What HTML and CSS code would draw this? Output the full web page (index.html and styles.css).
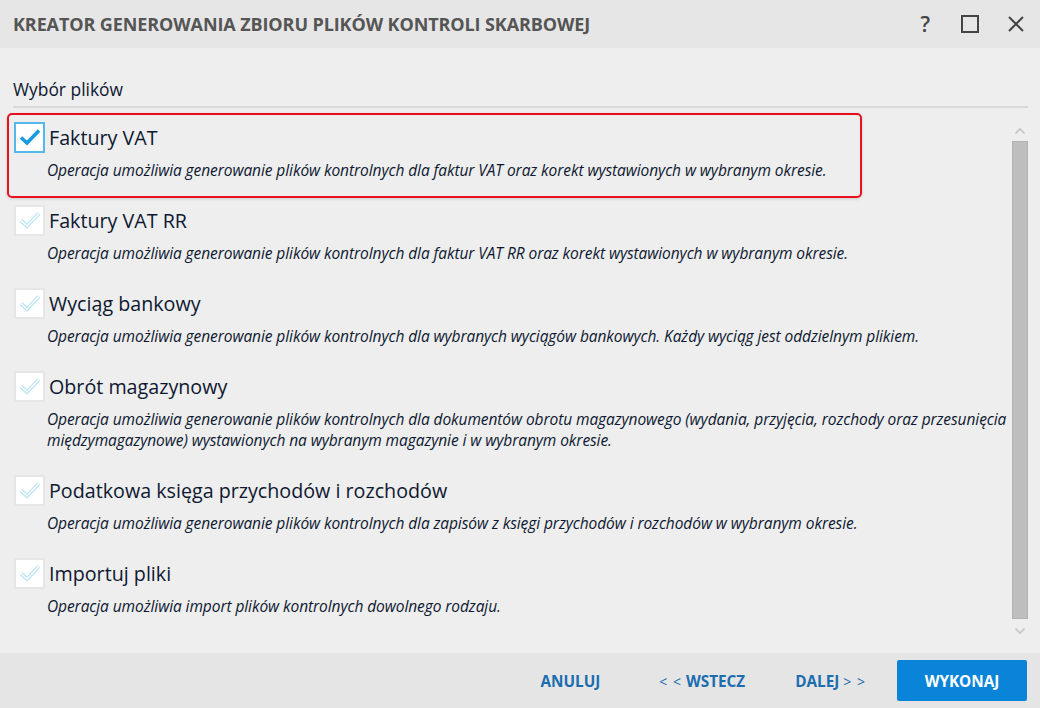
FILE: index.html
```html
<!DOCTYPE html>
<html lang="pl">
<head>
    <meta charset="UTF-8">
    <title>Kreator generowania zbioru plików kontroli skarbowej</title>
    <link rel="stylesheet" href="styles.css">
</head>
<body>
    <div class="dialog">
        <div class="titlebar">
            <div class="title">KREATOR GENEROWANIA ZBIORU PLIKÓW KONTROLI SKARBOWEJ</div>
            <div class="win-btns">
                <span class="help">?</span>
                <svg width="18" height="18" viewBox="0 0 18 18"><rect x="1" y="1" width="16" height="16" fill="none" stroke="#444" stroke-width="2"/></svg>
                <svg width="18" height="18" viewBox="0 0 18 18"><path d="M2 2L16 16M16 2L2 16" stroke="#444" stroke-width="2"/></svg>
            </div>
        </div>

        <div class="content">
            <div class="section">Wybór plików</div>

            <div class="list-wrap">
                <div class="list">
                    <div class="item selected">
                        <div class="row">
                            <span class="check on"><svg width="22" height="18" viewBox="0 0 22 18"><path d="M2 9.5L8 15L20 2.5" fill="none" stroke="#1a9be0" stroke-width="3.6"/></svg></span>
                            <span class="name">Faktury VAT</span>
                        </div>
                        <div class="desc">Operacja umożliwia generowanie plików kontrolnych dla faktur VAT oraz korekt wystawionych w wybranym okresie.</div>
                    </div>
                    <div class="item">
                        <div class="row">
                            <span class="check"><svg width="22" height="18" viewBox="0 0 22 18"><path d="M2 9.5L8 15L20 2.5" fill="none" stroke="#b9e4f6" stroke-width="3.8"/><path d="M2 9.5L8 15L20 2.5" fill="none" stroke="#fff" stroke-width="1.4"/></svg></span>
                            <span class="name">Faktury VAT RR</span>
                        </div>
                        <div class="desc">Operacja umożliwia generowanie plików kontrolnych dla faktur VAT RR oraz korekt wystawionych w wybranym okresie.</div>
                    </div>
                    <div class="item">
                        <div class="row">
                            <span class="check"><svg width="22" height="18" viewBox="0 0 22 18"><path d="M2 9.5L8 15L20 2.5" fill="none" stroke="#b9e4f6" stroke-width="3.8"/><path d="M2 9.5L8 15L20 2.5" fill="none" stroke="#fff" stroke-width="1.4"/></svg></span>
                            <span class="name">Wyciąg bankowy</span>
                        </div>
                        <div class="desc">Operacja umożliwia generowanie plików kontrolnych dla wybranych wyciągów bankowych. Każdy wyciąg jest oddzielnym plikiem.</div>
                    </div>
                    <div class="item">
                        <div class="row">
                            <span class="check"><svg width="22" height="18" viewBox="0 0 22 18"><path d="M2 9.5L8 15L20 2.5" fill="none" stroke="#b9e4f6" stroke-width="3.8"/><path d="M2 9.5L8 15L20 2.5" fill="none" stroke="#fff" stroke-width="1.4"/></svg></span>
                            <span class="name">Obrót magazynowy</span>
                        </div>
                        <div class="desc">Operacja umożliwia generowanie plików kontrolnych dla dokumentów obrotu magazynowego (wydania, przyjęcia, rozchody oraz przesunięcia<br>międzymagazynowe) wystawionych na wybranym magazynie i w wybranym okresie.</div>
                    </div>
                    <div class="item">
                        <div class="row">
                            <span class="check"><svg width="22" height="18" viewBox="0 0 22 18"><path d="M2 9.5L8 15L20 2.5" fill="none" stroke="#b9e4f6" stroke-width="3.8"/><path d="M2 9.5L8 15L20 2.5" fill="none" stroke="#fff" stroke-width="1.4"/></svg></span>
                            <span class="name">Podatkowa księga przychodów i rozchodów</span>
                        </div>
                        <div class="desc">Operacja umożliwia generowanie plików kontrolnych dla zapisów z księgi przychodów i rozchodów w wybranym okresie.</div>
                    </div>
                    <div class="item">
                        <div class="row">
                            <span class="check"><svg width="22" height="18" viewBox="0 0 22 18"><path d="M2 9.5L8 15L20 2.5" fill="none" stroke="#b9e4f6" stroke-width="3.8"/><path d="M2 9.5L8 15L20 2.5" fill="none" stroke="#fff" stroke-width="1.4"/></svg></span>
                            <span class="name">Importuj pliki</span>
                        </div>
                        <div class="desc">Operacja umożliwia import plików kontrolnych dowolnego rodzaju.</div>
                    </div>
                </div>

                <div class="scrollbar">
                    <svg width="12" height="8" viewBox="0 0 12 8"><path d="M1.5 6.5L6 2L10.5 6.5" fill="none" stroke="#c4c4c4" stroke-width="1.6"/></svg>
                    <div class="thumb"></div>
                    <svg width="12" height="8" viewBox="0 0 12 8"><path d="M1.5 1.5L6 6L10.5 1.5" fill="none" stroke="#c4c4c4" stroke-width="1.6"/></svg>
                </div>
            </div>
        </div>

        <div class="footer">
            <button class="link cancel">ANULUJ</button>
            <button class="link"><span class="arr">&lt; &lt;</span> WSTECZ</button>
            <button class="link">DALEJ <span class="arr">&gt; &gt;</span></button>
            <button class="primary">WYKONAJ</button>
        </div>
    </div>
</body>
</html>
```

FILE: styles.css
```css
* {
    margin: 0;
    padding: 0;
    box-sizing: border-box;
}

body {
    font-family: "Open Sans", "Noto Sans", sans-serif;
    background-color: #eeeeee;
    color: #0d1830;
}

.dialog {
    display: flex;
    flex-direction: column;
    width: 1040px;
    height: 708px;
}

.titlebar {
    height: 48px;
    flex-shrink: 0;
    display: flex;
    align-items: center;
    justify-content: space-between;
    padding: 0 15px 0 13px;
    background-color: #e6e6e6;
}

.title {
    font-size: 18px;
    font-weight: 700;
    color: #555555;
    letter-spacing: -0.1px;
}

.win-btns {
    display: flex;
    align-items: center;
    gap: 28px;
}

.help {
    font-size: 21px;
    font-weight: 600;
    color: #444;
    margin-right: 3px;
}

.content {
    flex: 1;
    display: flex;
    flex-direction: column;
    padding: 29px 12px 0 13px;
    min-height: 0;
}

.section {
    font-size: 17.4px;
    padding-bottom: 5px;
    border-bottom: 2px solid #d9d9d9;
}

.list-wrap {
    flex: 1;
    display: flex;
    min-height: 0;
}

.list {
    flex: 1;
    min-width: 0;
    padding: 5px 0 0 0;
    margin-left: -6px;
}

.item {
    width: fit-content;
    border: 2px solid transparent;
    border-radius: 5px;
    padding: 6px 33px 15px 5px;
    margin-bottom: -2px;
}

.item.selected {
    border-color: #e8101e;
    box-shadow: 0 1px 3px rgba(0, 0, 0, 0.15);
}

.row {
    display: flex;
    align-items: center;
    height: 32px;
}

.check {
    width: 31px;
    height: 31px;
    display: flex;
    align-items: center;
    justify-content: center;
    background-color: #fff;
    border: 2px solid #e6e6e6;
    margin-right: 4px;
}

.check.on {
    border-color: #56b7ea;
}

.name {
    font-size: 19.7px;
}

.desc {
    font-size: 15.5px;
    font-style: italic;
    line-height: 21px;
    margin: 7px 0 0 33px;
    letter-spacing: -0.08px;
    white-space: nowrap;
}

.scrollbar {
    width: 16px;
    display: flex;
    flex-direction: column;
    align-items: center;
    padding: 19px 0 18px;
    margin-left: 2px;
}

.thumb {
    flex: 1;
    width: 16px;
    margin: 6px 0 8px;
    background-color: #bebebe;
    border: 1px solid #b2b2b2;
}

.footer {
    height: 55px;
    flex-shrink: 0;
    display: flex;
    align-items: center;
    justify-content: flex-end;
    padding: 0 13px 0 0;
    background-color: #e5e5e5;
}

button {
    font-family: inherit;
    font-size: 15.3px;
    font-weight: 700;
    border: none;
    cursor: pointer;
}

.link {
    background: none;
    color: #1b6db0;
    padding: 0 25px;
}

.cancel {
    margin-right: 9px;
}

.arr {
    font-weight: 400;
    font-size: 14px;
    letter-spacing: 1px;
}

.primary {
    margin-left: 6px;
    width: 130px;
    height: 41px;
    border-radius: 2px;
    background-color: #0a84d9;
    color: #fff;
}
```
